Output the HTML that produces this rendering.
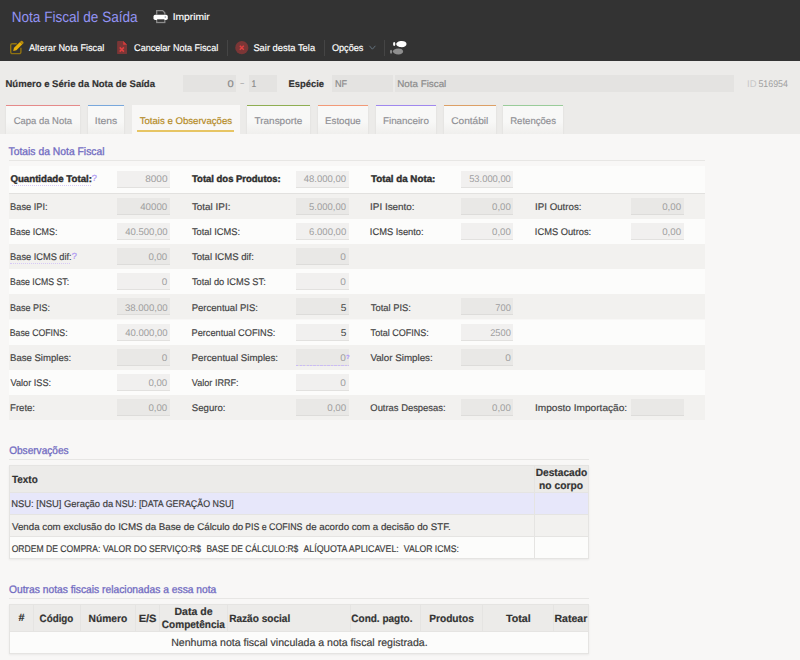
<!DOCTYPE html>
<html lang="pt-BR"><head><meta charset="utf-8"><title>Nota Fiscal de Saída</title>
<style>
html,body{margin:0;padding:0}
body{width:800px;height:660px;position:relative;overflow:hidden;background:#f8f7f6;font-family:"Liberation Sans", sans-serif}
#bx div{position:absolute}
.t{position:absolute;white-space:pre;line-height:1;transform-origin:0 50%;font-family:"Liberation Sans", sans-serif;text-rendering:geometricPrecision}
.md{-webkit-text-stroke:.16px #fff}
.hv{-webkit-text-stroke:.18px}
.hd{-webkit-text-stroke:.32px}
.bd{-webkit-text-stroke:.4px}
.ic{position:absolute;overflow:visible}
</style></head>
<body>
<div id="bx">
<div style="left:0px;top:0px;width:800px;height:61px;background:#333333"></div>
<div style="left:0px;top:61px;width:800px;height:73px;background:#ecebe9"></div>
<div style="left:227px;top:39.5px;width:1px;height:16px;background:#454545"></div>
<div style="left:324px;top:39.5px;width:1px;height:16px;background:#454545"></div>
<div style="left:384px;top:39.5px;width:1px;height:16px;background:#454545"></div>
<div style="left:182.6px;top:75px;width:53.4px;height:17px;background:#e4e3e1"></div>
<div style="left:249px;top:75px;width:28px;height:17px;background:#e4e3e1"></div>
<div style="left:332px;top:75px;width:61px;height:17px;background:#e4e3e1"></div>
<div style="left:395px;top:75px;width:339.4px;height:17px;background:#e4e3e1"></div>
<div style="left:6px;top:105px;width:74px;height:29px;background:linear-gradient(#f8f8f7 55%,#f0efed);border-top:1px solid #e58a8a;box-sizing:border-box;box-shadow:0 1px 2px rgba(0,0,0,.08)"></div>
<div style="left:88px;top:105px;width:36.4px;height:29px;background:linear-gradient(#f8f8f7 55%,#f0efed);border-top:1px solid #79a8dc;box-sizing:border-box;box-shadow:0 1px 2px rgba(0,0,0,.08)"></div>
<div style="left:247px;top:105px;width:63px;height:29px;background:linear-gradient(#f8f8f7 55%,#f0efed);border-top:1px solid #8fae52;box-sizing:border-box;box-shadow:0 1px 2px rgba(0,0,0,.08)"></div>
<div style="left:317.6px;top:105px;width:50.4px;height:29px;background:linear-gradient(#f8f8f7 55%,#f0efed);border-top:1px solid #f29a78;box-sizing:border-box;box-shadow:0 1px 2px rgba(0,0,0,.08)"></div>
<div style="left:375.6px;top:105px;width:60.4px;height:29px;background:linear-gradient(#f8f8f7 55%,#f0efed);border-top:1px solid #a088ee;box-sizing:border-box;box-shadow:0 1px 2px rgba(0,0,0,.08)"></div>
<div style="left:443.6px;top:105px;width:52px;height:29px;background:linear-gradient(#f8f8f7 55%,#f0efed);border-top:1px solid #dca066;box-sizing:border-box;box-shadow:0 1px 2px rgba(0,0,0,.08)"></div>
<div style="left:502.6px;top:105px;width:60.6px;height:29px;background:linear-gradient(#f8f8f7 55%,#f0efed);border-top:1px solid #9acc9a;box-sizing:border-box;box-shadow:0 1px 2px rgba(0,0,0,.08)"></div>
<div style="left:0px;top:134px;width:800px;height:526px;background:#f8f7f6"></div>
<div style="left:132px;top:105px;width:107.6px;height:30px;background:#f8f7f6"></div>
<div style="left:137.4px;top:130.3px;width:97px;height:1.4px;background:#e7c564"></div>
<div style="left:9px;top:160px;width:695.8px;height:1px;background:#e7e6e4"></div>
<div style="left:9px;top:459px;width:580.2px;height:1px;background:#e7e6e4"></div>
<div style="left:9px;top:598px;width:580.2px;height:1px;background:#e7e6e4"></div>
<div style="left:9px;top:166px;width:695.8px;height:27px;background:#fcfcfb"></div>
<div style="left:9px;top:193px;width:695.8px;height:1px;background:#e2e1df"></div>
<div style="left:9px;top:194px;width:695.8px;height:25.1px;background:#f2f1ef"></div>
<div style="left:9px;top:219.1px;width:695.8px;height:25.1px;background:#fcfcfb"></div>
<div style="left:9px;top:244.2px;width:695.8px;height:25.1px;background:#f2f1ef"></div>
<div style="left:9px;top:269.3px;width:695.8px;height:25.1px;background:#fcfcfb"></div>
<div style="left:9px;top:294.4px;width:695.8px;height:25.1px;background:#f2f1ef"></div>
<div style="left:9px;top:319.5px;width:695.8px;height:25.1px;background:#fcfcfb"></div>
<div style="left:9px;top:344.6px;width:695.8px;height:25.1px;background:#f2f1ef"></div>
<div style="left:9px;top:369.7px;width:695.8px;height:25.1px;background:#fcfcfb"></div>
<div style="left:9px;top:394.8px;width:695.8px;height:25.1px;background:#f2f1ef"></div>
<div style="left:117px;top:170.6px;width:53px;height:17px;background:#f1f0ef;border-bottom:1px solid #e2e1df;box-sizing:border-box"></div>
<div style="left:295.6px;top:170.6px;width:53.1px;height:17px;background:#f1f0ef;border-bottom:1px solid #e2e1df;box-sizing:border-box"></div>
<div style="left:460.6px;top:170.6px;width:52.9px;height:17px;background:#f1f0ef;border-bottom:1px solid #e2e1df;box-sizing:border-box"></div>
<div style="left:117px;top:198px;width:53px;height:17px;background:#e9e8e6;border-bottom:1px solid #dddcda;box-sizing:border-box"></div>
<div style="left:295.6px;top:198px;width:53.1px;height:17px;background:#e9e8e6;border-bottom:1px solid #dddcda;box-sizing:border-box"></div>
<div style="left:460.6px;top:198px;width:52.9px;height:17px;background:#e9e8e6;border-bottom:1px solid #dddcda;box-sizing:border-box"></div>
<div style="left:630.6px;top:198px;width:53px;height:17px;background:#e9e8e6;border-bottom:1px solid #dddcda;box-sizing:border-box"></div>
<div style="left:117px;top:223.1px;width:53px;height:17px;background:#f1f0ef;border-bottom:1px solid #e2e1df;box-sizing:border-box"></div>
<div style="left:295.6px;top:223.1px;width:53.1px;height:17px;background:#f1f0ef;border-bottom:1px solid #e2e1df;box-sizing:border-box"></div>
<div style="left:460.6px;top:223.1px;width:52.9px;height:17px;background:#f1f0ef;border-bottom:1px solid #e2e1df;box-sizing:border-box"></div>
<div style="left:630.6px;top:223.1px;width:53px;height:17px;background:#f1f0ef;border-bottom:1px solid #e2e1df;box-sizing:border-box"></div>
<div style="left:117px;top:248.2px;width:53px;height:17px;background:#e9e8e6;border-bottom:1px solid #dddcda;box-sizing:border-box"></div>
<div style="left:295.6px;top:248.2px;width:53.1px;height:17px;background:#e9e8e6;border-bottom:1px solid #dddcda;box-sizing:border-box"></div>
<div style="left:117px;top:273.3px;width:53px;height:17px;background:#f1f0ef;border-bottom:1px solid #e2e1df;box-sizing:border-box"></div>
<div style="left:295.6px;top:273.3px;width:53.1px;height:17px;background:#f1f0ef;border-bottom:1px solid #e2e1df;box-sizing:border-box"></div>
<div style="left:117px;top:298.4px;width:53px;height:17px;background:#e9e8e6;border-bottom:1px solid #dddcda;box-sizing:border-box"></div>
<div style="left:295.6px;top:298.4px;width:53.1px;height:17px;background:#e9e8e6;border-bottom:1px solid #dddcda;box-sizing:border-box"></div>
<div style="left:460.6px;top:298.4px;width:52.9px;height:17px;background:#e9e8e6;border-bottom:1px solid #dddcda;box-sizing:border-box"></div>
<div style="left:117px;top:323.5px;width:53px;height:17px;background:#f1f0ef;border-bottom:1px solid #e2e1df;box-sizing:border-box"></div>
<div style="left:295.6px;top:323.5px;width:53.1px;height:17px;background:#f1f0ef;border-bottom:1px solid #e2e1df;box-sizing:border-box"></div>
<div style="left:460.6px;top:323.5px;width:52.9px;height:17px;background:#f1f0ef;border-bottom:1px solid #e2e1df;box-sizing:border-box"></div>
<div style="left:117px;top:348.6px;width:53px;height:17px;background:#e9e8e6;border-bottom:1px solid #dddcda;box-sizing:border-box"></div>
<div style="left:295.6px;top:348.6px;width:53.1px;height:17px;background:#e9e8e6;border-bottom:1px solid #dddcda;box-sizing:border-box"></div>
<div style="left:460.6px;top:348.6px;width:52.9px;height:17px;background:#e9e8e6;border-bottom:1px solid #dddcda;box-sizing:border-box"></div>
<div style="left:117px;top:373.7px;width:53px;height:17px;background:#f1f0ef;border-bottom:1px solid #e2e1df;box-sizing:border-box"></div>
<div style="left:295.6px;top:373.7px;width:53.1px;height:17px;background:#f1f0ef;border-bottom:1px solid #e2e1df;box-sizing:border-box"></div>
<div style="left:117px;top:398.8px;width:53px;height:17px;background:#e9e8e6;border-bottom:1px solid #dddcda;box-sizing:border-box"></div>
<div style="left:295.6px;top:398.8px;width:53.1px;height:17px;background:#e9e8e6;border-bottom:1px solid #dddcda;box-sizing:border-box"></div>
<div style="left:460.6px;top:398.8px;width:52.9px;height:17px;background:#e9e8e6;border-bottom:1px solid #dddcda;box-sizing:border-box"></div>
<div style="left:630.6px;top:398.8px;width:53px;height:17px;background:#e9e8e6;border-bottom:1px solid #dddcda;box-sizing:border-box"></div>
<div style="left:12px;top:184.6px;width:79px;height:0;border-top:1px dotted #d6c8f6"></div>
<div style="left:10.4px;top:262.9px;width:60px;height:0;border-top:1px dotted #d6c8f6"></div>
<div style="left:295.6px;top:365.2px;width:53px;height:1px;background:repeating-linear-gradient(90deg,#cbbcf5 0 2px,transparent 2px 3.5px)"></div>
<div style="left:9px;top:465.4px;width:580.2px;height:93.2px;background:#e5e4e2;box-shadow:0 1px 2px rgba(0,0,0,.06)"></div>
<div style="left:10px;top:466.4px;width:524px;height:25.6px;background:#ecebe9"></div>
<div style="left:535px;top:466.4px;width:53.2px;height:25.6px;background:#ecebe9"></div>
<div style="left:10px;top:492.6px;width:524px;height:21.4px;background:#e7e7fa"></div>
<div style="left:535px;top:492.6px;width:53.2px;height:21.4px;background:#e7e7fa"></div>
<div style="left:10px;top:514.8px;width:524px;height:21.6px;background:#f2f1ef"></div>
<div style="left:535px;top:514.8px;width:53.2px;height:21.6px;background:#f2f1ef"></div>
<div style="left:10px;top:537.2px;width:524px;height:20.4px;background:#fcfcfb"></div>
<div style="left:535px;top:537.2px;width:53.2px;height:20.4px;background:#fcfcfb"></div>
<div style="left:9px;top:604.2px;width:580.2px;height:50.2px;background:#e5e4e2;box-shadow:0 1px 2px rgba(0,0,0,.06)"></div>
<div style="left:10px;top:605.2px;width:22.8px;height:26px;background:#ecebe9"></div>
<div style="left:33.8px;top:605.2px;width:46.3px;height:26px;background:#ecebe9"></div>
<div style="left:81.1px;top:605.2px;width:54.2px;height:26px;background:#ecebe9"></div>
<div style="left:136.3px;top:605.2px;width:22.8px;height:26px;background:#ecebe9"></div>
<div style="left:160.1px;top:605.2px;width:66.5px;height:26px;background:#ecebe9"></div>
<div style="left:227.6px;top:605.2px;width:122px;height:26px;background:#ecebe9"></div>
<div style="left:350.6px;top:605.2px;width:69.5px;height:26px;background:#ecebe9"></div>
<div style="left:421.1px;top:605.2px;width:61px;height:26px;background:#ecebe9"></div>
<div style="left:483.1px;top:605.2px;width:69.5px;height:26px;background:#ecebe9"></div>
<div style="left:553.6px;top:605.2px;width:34.6px;height:26px;background:#ecebe9"></div>
<div style="left:10px;top:632px;width:578.2px;height:21.4px;background:#fcfcfb"></div>
</div>

<svg class="ic" style="left:152px;top:8px" width="18" height="17" viewBox="152 8 18 17">
 <path d="M156.7 14.6v-4h6l2.100 2.100v1.900" fill="none" stroke="#8d8d8d" stroke-width="1.300"/>
 <rect x="156.700" y="19.200" width="8.100" height="3.300" fill="none" stroke="#8d8d8d" stroke-width="1.300"/>
 <rect x="153.500" y="14.700" width="14.300" height="5.300" rx="1.700" fill="#fff"/>
 <rect x="157.100" y="19.300" width="7.300" height="1.100" fill="#3a3a3a"/>
 <circle cx="165.300" cy="17.100" r=".8" fill="#9aa4ae"/>
</svg>
<svg class="ic" style="left:8px;top:39px" width="18" height="18" viewBox="8 39 18 18">
 <path d="M16.800 43.700h-4.500a1.600 1.600 0 0 0-1.600 1.600v6.700a1.600 1.600 0 0 0 1.600 1.600h7a1.600 1.600 0 0 0 1.600-1.600v-4.200" fill="none" stroke="#8f7210" stroke-width="1.400"/>
 <path d="M13.200 51l.8-3.200 6-5.900 2.400 2.400-6 5.900z" fill="#e6b00a"/>
 <path d="M20 41.900l.9-.9a1 1 0 0 1 1.400 0l1 1a1 1 0 0 1 0 1.400l-.9.9z" fill="#b88d0c"/>
</svg>
<svg class="ic" style="left:115px;top:39px" width="14" height="17" viewBox="115 39 14 17">
 <path d="M118 41h5.200l3.800 3.800v8.400a.9.900 0 0 1-.9.900h-8.100a.9.900 0 0 1-.9-.9v-11.300a.9.900 0 0 1 .9-.9z" fill="#7b3636"/>
 <path d="M123.200 41l3.800 3.800h-3.800z" fill="#d63c3c"/>
 <path d="M119.700 47.400l4.200 4.200m0-4.200l-4.200 4.200" stroke="#e04040" stroke-width="1.500" fill="none"/>
</svg>
<svg class="ic" style="left:234px;top:40px" width="16" height="16" viewBox="234 40 16 16">
 <circle cx="241.800" cy="47.700" r="6.600" fill="#7b3636"/>
 <path d="M239.800 45.700l4 4m0-4l-4 4" stroke="#e04040" stroke-width="1.500" fill="none"/>
</svg>
<svg class="ic" style="left:368px;top:44px" width="9" height="7" viewBox="368 44 9 7">
 <path d="M369.400 45.800l3 3.400 3-3.400" stroke="#62707c" stroke-width="1" fill="none"/>
</svg>
<svg class="ic" style="left:388px;top:39px" width="20" height="17" viewBox="388 39 20 17">
 <ellipse cx="394.200" cy="44" rx="1.150" ry="2.050" fill="#fff"/>
 <path d="M396.200 44.100C396.200 42.600 398.500 41 401.800 41C404.600 41 406.500 42.300 406.500 44.100C406.500 45.900 404.600 47.300 401.800 47.300C398.500 47.300 396.200 45.600 396.200 44.100Z" fill="#fff"/>
 <ellipse cx="391.050" cy="51.700" rx="1.050" ry="1.950" fill="#8e8e8e"/>
 <path d="M392.900 51.500C392.900 50 395.200 48.600 398.400 48.600C401.200 48.600 403.100 49.800 403.100 51.500C403.100 53.200 401.200 54.400 398.400 54.400C395.200 54.400 392.900 53 392.900 51.500Z" fill="#8e8e8e"/>
</svg>

<div id="tx">
<span class="t" style="left:11px;top:10.3px;font-size:15px;color:#9494f5;transform:translateX(0.72px) scaleX(0.9043)">Nota Fiscal de Saída</span>
<span class="t md" style="left:172px;top:12.69px;font-size:9.7px;color:#fff;transform:translateX(0.67px) scaleX(1.0598)">Imprimir</span>
<span class="t md" style="left:28px;top:43.59px;font-size:9.7px;color:#fff;transform:translateX(0.95px) scaleX(0.9460)">Alterar Nota Fiscal</span>
<span class="t md" style="left:134px;top:43.59px;font-size:9.7px;color:#fff;transform:translateX(0.12px) scaleX(0.9352)">Cancelar Nota Fiscal</span>
<span class="t md" style="left:253px;top:43.59px;font-size:9.7px;color:#fff;transform:translateX(0.38px) scaleX(0.9655)">Sair desta Tela</span>
<span class="t md" style="left:331px;top:43.59px;font-size:9.7px;color:#fff;transform:translateX(0.89px) scaleX(0.9430)">Opções</span>
<span class="t hv" style="left:5px;top:79.79px;font-size:9.7px;color:#333;transform:translateX(0.44px) scaleX(0.9851);font-weight:700">Número e Série da Nota de Saída</span>
<span class="t hv" style="left:227px;top:79.79px;font-size:9.7px;color:#8a8a8a;transform:translateX(0.39px) scaleX(1.1451)">0</span>
<span class="t hv" style="left:240px;top:78.79px;font-size:9.7px;color:#b4b4b4;transform:translateX(0.05px) scaleX(1.3444)">-</span>
<span class="t hv" style="left:251px;top:79.79px;font-size:9.7px;color:#8a8a8a;transform:translateX(0.41px) scaleX(0.8726)">1</span>
<span class="t hv" style="left:288px;top:79.79px;font-size:9.7px;color:#333;transform:translateX(0.50px) scaleX(0.9703);font-weight:700">Espécie</span>
<span class="t hv" style="left:335px;top:79.79px;font-size:9.7px;color:#8a8a8a;transform:translateX(0.03px) scaleX(0.9398)">NF</span>
<span class="t hv" style="left:397px;top:79.79px;font-size:9.7px;color:#8a8a8a;transform:translateX(0.15px) scaleX(1.0144)">Nota Fiscal</span>
<span class="t" style="left:747px;top:79.79px;font-size:9.7px;color:#c8c8c8;transform:translateX(0.05px) scaleX(0.9819)">ID</span>
<span class="t" style="left:758px;top:79.79px;font-size:9.7px;color:#a0a0a0;transform:translateX(0.44px) scaleX(0.9091)">516954</span>
<span class="t hv" style="left:13px;top:117.29px;font-size:9.7px;color:#909095;transform:translateX(0.73px) scaleX(0.9755)">Capa da Nota</span>
<span class="t hv" style="left:94px;top:117.29px;font-size:9.7px;color:#909095;transform:translateX(0.87px) scaleX(1.0672)">Itens</span>
<span class="t hv" style="left:139px;top:117.29px;font-size:9.7px;color:#b48a24;transform:translateX(0.69px) scaleX(0.9913)">Totais e Observações</span>
<span class="t hv" style="left:254px;top:117.29px;font-size:9.7px;color:#909095;transform:translateX(0.57px) scaleX(1.0262)">Transporte</span>
<span class="t hv" style="left:325px;top:117.29px;font-size:9.7px;color:#909095;transform:translateX(0.05px) scaleX(1.0054)">Estoque</span>
<span class="t hv" style="left:382px;top:117.29px;font-size:9.7px;color:#909095;transform:translateX(0.97px) scaleX(1.0146)">Financeiro</span>
<span class="t hv" style="left:451px;top:117.29px;font-size:9.7px;color:#909095;transform:translateX(0.18px) scaleX(1.0459)">Contábil</span>
<span class="t hv" style="left:510px;top:117.29px;font-size:9.7px;color:#909095;transform:translateX(0.14px) scaleX(0.9889)">Retenções</span>
<span class="t hd" style="left:8px;top:146.77px;font-size:10.9px;color:#726cc2;transform:translateX(0.50px) scaleX(0.9502)">Totais da Nota Fiscal</span>
<span class="t hd" style="left:9px;top:445.57px;font-size:10.9px;color:#726cc2;transform:translateX(0.16px) scaleX(0.9259)">Observações</span>
<span class="t hd" style="left:9px;top:584.77px;font-size:10.9px;color:#726cc2;transform:translateX(0.04px) scaleX(0.9433)">Outras notas fiscais relacionadas a essa nota</span>
<span class="t bd" style="left:10px;top:174.79px;font-size:9.7px;color:#2e2e2e;transform:translateX(0.41px) scaleX(0.9992);font-weight:700">Quantidade Total:</span>
<span class="t" style="left:145px;top:174.79px;font-size:9.7px;color:#9f9f9f;transform:translateX(0.20px) scaleX(1.0369)">8000</span>
<span class="t bd" style="left:192px;top:174.79px;font-size:9.7px;color:#2e2e2e;transform:translateX(0.01px) scaleX(0.9779);font-weight:700">Total dos Produtos:</span>
<span class="t" style="left:303px;top:174.79px;font-size:9.7px;color:#9f9f9f;transform:translateX(0.78px) scaleX(0.9814)">48.000,00</span>
<span class="t bd" style="left:370px;top:174.79px;font-size:9.7px;color:#2e2e2e;transform:translateX(0.97px) scaleX(1.0074);font-weight:700">Total da Nota:</span>
<span class="t" style="left:469px;top:174.79px;font-size:9.7px;color:#9f9f9f;transform:translateX(0.16px) scaleX(0.9665)">53.000,00</span>
<span class="t hv" style="left:10px;top:202.89px;font-size:9.7px;color:#444;transform:translateX(0.11px) scaleX(0.9558)">Base IPI:</span>
<span class="t" style="left:140px;top:202.89px;font-size:9.7px;color:#9f9f9f;transform:translateX(0.20px) scaleX(1.0022)">40000</span>
<span class="t hv" style="left:191px;top:202.89px;font-size:9.7px;color:#444;transform:translateX(0.89px) scaleX(1.0217)">Total IPI:</span>
<span class="t" style="left:309px;top:202.89px;font-size:9.7px;color:#9f9f9f;transform:translateX(0.12px) scaleX(0.9751)">5.000,00</span>
<span class="t hv" style="left:370px;top:202.89px;font-size:9.7px;color:#444;transform:translateX(0.08px) scaleX(1.0192)">IPI Isento:</span>
<span class="t" style="left:492px;top:202.89px;font-size:9.7px;color:#9f9f9f;transform:translateX(0.02px) scaleX(0.9950)">0,00</span>
<span class="t hv" style="left:535px;top:202.89px;font-size:9.7px;color:#444;transform:translateX(0.10px) scaleX(1.0017)">IPI Outros:</span>
<span class="t" style="left:662px;top:202.89px;font-size:9.7px;color:#9f9f9f;transform:translateX(0.16px) scaleX(1.0000)">0,00</span>
<span class="t hv" style="left:10px;top:227.99px;font-size:9.7px;color:#444;transform:translateX(0.03px) scaleX(0.9167)">Base ICMS:</span>
<span class="t" style="left:125px;top:227.99px;font-size:9.7px;color:#9f9f9f;transform:translateX(0.25px) scaleX(0.9830)">40.500,00</span>
<span class="t hv" style="left:191px;top:227.99px;font-size:9.7px;color:#444;transform:translateX(0.94px) scaleX(0.9599)">Total ICMS:</span>
<span class="t" style="left:309px;top:227.99px;font-size:9.7px;color:#9f9f9f;transform:translateX(0.10px) scaleX(0.9833)">6.000,00</span>
<span class="t hv" style="left:369px;top:227.99px;font-size:9.7px;color:#444;transform:translateX(0.85px) scaleX(0.9605)">ICMS Isento:</span>
<span class="t" style="left:492px;top:227.99px;font-size:9.7px;color:#9f9f9f;transform:translateX(0.02px) scaleX(0.9950)">0,00</span>
<span class="t hv" style="left:534px;top:227.99px;font-size:9.7px;color:#444;transform:translateX(0.87px) scaleX(0.9600)">ICMS Outros:</span>
<span class="t" style="left:662px;top:227.99px;font-size:9.7px;color:#9f9f9f;transform:translateX(0.16px) scaleX(1.0000)">0,00</span>
<span class="t hv" style="left:10px;top:253.09px;font-size:9.7px;color:#444;transform:translateX(0.09px) scaleX(0.9533)">Base ICMS dif:</span>
<span class="t" style="left:148px;top:253.09px;font-size:9.7px;color:#9f9f9f;transform:translateX(0.42px) scaleX(0.9969)">0,00</span>
<span class="t hv" style="left:191px;top:253.09px;font-size:9.7px;color:#444;transform:translateX(0.91px) scaleX(0.9834)">Total ICMS dif:</span>
<span class="t" style="left:340px;top:253.09px;font-size:9.7px;color:#9f9f9f;transform:translateX(0.21px) scaleX(1.0381)">0</span>
<span class="t hv" style="left:10px;top:278.19px;font-size:9.7px;color:#444;transform:translateX(0.12px) scaleX(0.8981)">Base ICMS ST:</span>
<span class="t" style="left:161px;top:278.19px;font-size:9.7px;color:#9f9f9f;transform:translateX(0.81px) scaleX(1.0204)">0</span>
<span class="t hv" style="left:191px;top:278.19px;font-size:9.7px;color:#444;transform:translateX(0.91px) scaleX(0.9517)">Total do ICMS ST:</span>
<span class="t" style="left:340px;top:278.19px;font-size:9.7px;color:#9f9f9f;transform:translateX(0.21px) scaleX(1.0381)">0</span>
<span class="t hv" style="left:10px;top:304.29px;font-size:9.7px;color:#444;transform:translateX(0.05px) scaleX(0.9254)">Base PIS:</span>
<span class="t" style="left:124px;top:304.29px;font-size:9.7px;color:#9f9f9f;transform:translateX(0.90px) scaleX(0.9898)">38.000,00</span>
<span class="t hv" style="left:191px;top:304.29px;font-size:9.7px;color:#444;transform:translateX(0.64px) scaleX(0.9856)">Percentual PIS:</span>
<span class="t" style="left:340px;top:304.29px;font-size:9.7px;color:#444;transform:translateX(0.67px) scaleX(1.0444)">5</span>
<span class="t hv" style="left:370px;top:304.29px;font-size:9.7px;color:#444;transform:translateX(0.71px) scaleX(0.9712)">Total PIS:</span>
<span class="t" style="left:495px;top:304.29px;font-size:9.7px;color:#9f9f9f;transform:translateX(0.35px) scaleX(0.9581)">700</span>
<span class="t hv" style="left:9px;top:329.39px;font-size:9.7px;color:#444;transform:translateX(0.76px) scaleX(0.9035)">Base COFINS:</span>
<span class="t" style="left:125px;top:329.39px;font-size:9.7px;color:#9f9f9f;transform:translateX(0.25px) scaleX(0.9830)">40.000,00</span>
<span class="t hv" style="left:191px;top:329.39px;font-size:9.7px;color:#444;transform:translateX(0.54px) scaleX(0.9499)">Percentual COFINS:</span>
<span class="t" style="left:340px;top:329.39px;font-size:9.7px;color:#444;transform:translateX(0.67px) scaleX(1.0444)">5</span>
<span class="t hv" style="left:370px;top:329.39px;font-size:9.7px;color:#444;transform:translateX(0.62px) scaleX(0.9313)">Total COFINS:</span>
<span class="t" style="left:490px;top:329.39px;font-size:9.7px;color:#9f9f9f;transform:translateX(0.21px) scaleX(0.9566)">2500</span>
<span class="t hv" style="left:10px;top:354.49px;font-size:9.7px;color:#444;transform:translateX(0.04px) scaleX(0.9866)">Base Simples:</span>
<span class="t" style="left:161px;top:354.49px;font-size:9.7px;color:#9f9f9f;transform:translateX(0.81px) scaleX(1.0204)">0</span>
<span class="t hv" style="left:191px;top:354.49px;font-size:9.7px;color:#444;transform:translateX(0.60px) scaleX(1.0032)">Percentual Simples:</span>
<span class="t" style="left:340px;top:354.49px;font-size:9.7px;color:#9f9f9f;transform:translateX(0.21px) scaleX(1.0381)">0</span>
<span class="t hv" style="left:370px;top:354.49px;font-size:9.7px;color:#444;transform:translateX(0.38px) scaleX(1.0095)">Valor Simples:</span>
<span class="t" style="left:505px;top:354.49px;font-size:9.7px;color:#9f9f9f;transform:translateX(0.17px) scaleX(1.0401)">0</span>
<span class="t hv" style="left:10px;top:378.59px;font-size:9.7px;color:#444;transform:translateX(0.45px) scaleX(0.9477)">Valor ISS:</span>
<span class="t" style="left:148px;top:378.59px;font-size:9.7px;color:#9f9f9f;transform:translateX(0.42px) scaleX(0.9969)">0,00</span>
<span class="t hv" style="left:191px;top:378.59px;font-size:9.7px;color:#444;transform:translateX(0.83px) scaleX(0.9382)">Valor IRRF:</span>
<span class="t" style="left:340px;top:378.59px;font-size:9.7px;color:#9f9f9f;transform:translateX(0.21px) scaleX(1.0381)">0</span>
<span class="t hv" style="left:10px;top:403.69px;font-size:9.7px;color:#444;transform:translateX(0.04px) scaleX(0.9866)">Frete:</span>
<span class="t" style="left:148px;top:403.69px;font-size:9.7px;color:#9f9f9f;transform:translateX(0.42px) scaleX(0.9969)">0,00</span>
<span class="t hv" style="left:191px;top:403.69px;font-size:9.7px;color:#444;transform:translateX(0.86px) scaleX(0.9918)">Seguro:</span>
<span class="t" style="left:327px;top:403.69px;font-size:9.7px;color:#9f9f9f;transform:translateX(0.21px) scaleX(1.0099)">0,00</span>
<span class="t hv" style="left:370px;top:403.69px;font-size:9.7px;color:#444;transform:translateX(0.33px) scaleX(0.9704)">Outras Despesas:</span>
<span class="t" style="left:492px;top:403.69px;font-size:9.7px;color:#9f9f9f;transform:translateX(0.02px) scaleX(0.9950)">0,00</span>
<span class="t hv" style="left:535px;top:403.69px;font-size:9.7px;color:#444;transform:translateX(0.01px) scaleX(1.0433)">Imposto Importação:</span>
<span class="t hv" style="left:91px;top:173.55px;font-size:8.8px;color:#ae98f4;transform:translateX(0.83px) scaleX(1.0553)">?</span>
<span class="t hv" style="left:71px;top:251.85px;font-size:8.8px;color:#ae98f4;transform:translateX(0.83px) scaleX(1.0553)">?</span>
<span class="t hv" style="left:345px;top:354.62px;font-size:6px;color:#b09af4;transform:translateX(0.88px) scaleX(1.0018);font-weight:700">?</span>
<span class="t hv" style="left:12px;top:474.63px;font-size:10.6px;color:#333;transform:translateX(0.04px) scaleX(0.9337);font-weight:700">Texto</span>
<span class="t hv" style="left:535px;top:468.33px;font-size:10.6px;color:#333;transform:translateX(0.65px) scaleX(0.9623);font-weight:700">Destacado</span>
<span class="t hv" style="left:539px;top:481.03px;font-size:10.6px;color:#333;transform:translateX(0.09px) scaleX(0.9684);font-weight:700">no corpo</span>
<span class="t hv" style="left:11px;top:499.79px;font-size:9.7px;color:#3c3c3c;transform:translateX(0.22px) scaleX(0.9709)">NSU: [NSU] Geração da</span>
<span class="t hv" style="left:115px;top:499.79px;font-size:9.7px;color:#3c3c3c;transform:translateX(0.22px) scaleX(0.9166)">NSU: [DATA GERAÇÃO NSU]</span>
<span class="t hv" style="left:11px;top:522.79px;font-size:9.7px;color:#3c3c3c;transform:translateX(0.98px) scaleX(1.0059)">Venda com exclusão do ICMS da Base de Cálculo do</span>
<span class="t hv" style="left:245px;top:522.79px;font-size:9.7px;color:#3c3c3c;transform:translateX(0.09px) scaleX(0.9097)">PIS e COFINS</span>
<span class="t hv" style="left:305px;top:522.79px;font-size:9.7px;color:#3c3c3c;transform:translateX(0.78px) scaleX(1.0042)">de acordo com a decisão do STF.</span>
<span class="t hv" style="left:11px;top:544.79px;font-size:9.7px;color:#3c3c3c;transform:translateX(0.65px) scaleX(0.8869)">ORDEM DE COMPRA:</span>
<span class="t hv" style="left:102px;top:544.79px;font-size:9.7px;color:#3c3c3c;transform:translateX(0.94px) scaleX(0.8872)">VALOR DO SERVIÇO:R$</span>
<span class="t hv" style="left:206px;top:544.79px;font-size:9.7px;color:#3c3c3c;transform:translateX(0.42px) scaleX(0.8706)">BASE DE CÁLCULO:R$</span>
<span class="t hv" style="left:303px;top:544.79px;font-size:9.7px;color:#3c3c3c;transform:translateX(0.40px) scaleX(0.9113)">ALÍQUOTA APLICAVEL:</span>
<span class="t hv" style="left:403px;top:544.79px;font-size:9.7px;color:#3c3c3c;transform:translateX(0.80px) scaleX(0.8925)">VALOR ICMS:</span>
<span class="t hv" style="left:18px;top:612.63px;font-size:10.6px;color:#333;transform:translateX(0.58px) scaleX(1.0156);font-weight:700">#</span>
<span class="t hv" style="left:39px;top:613.63px;font-size:10.6px;color:#333;transform:translateX(0.59px) scaleX(0.9253);font-weight:700">Código</span>
<span class="t hv" style="left:88px;top:613.63px;font-size:10.6px;color:#333;transform:translateX(0.60px) scaleX(0.9661);font-weight:700">Número</span>
<span class="t hv" style="left:138px;top:613.63px;font-size:10.6px;color:#333;transform:translateX(0.63px) scaleX(1.0485);font-weight:700">E/S</span>
<span class="t hv" style="left:174px;top:607.03px;font-size:10.6px;color:#333;transform:translateX(0.51px) scaleX(0.9943);font-weight:700">Data de</span>
<span class="t hv" style="left:161px;top:619.53px;font-size:10.6px;color:#333;transform:translateX(0.79px) scaleX(0.9488);font-weight:700">Competência</span>
<span class="t hv" style="left:229px;top:613.63px;font-size:10.6px;color:#333;transform:translateX(0.21px) scaleX(0.9508);font-weight:700">Razão social</span>
<span class="t hv" style="left:351px;top:613.63px;font-size:10.6px;color:#333;transform:translateX(0.30px) scaleX(0.9449);font-weight:700">Cond. pagto.</span>
<span class="t hv" style="left:429px;top:613.63px;font-size:10.6px;color:#333;transform:translateX(0.17px) scaleX(0.9604);font-weight:700">Produtos</span>
<span class="t hv" style="left:505px;top:613.63px;font-size:10.6px;color:#333;transform:translateX(0.99px) scaleX(1.0085);font-weight:700">Total</span>
<span class="t hv" style="left:554px;top:613.63px;font-size:10.6px;color:#333;transform:translateX(0.48px) scaleX(0.9939);font-weight:700">Ratear</span>
<span class="t hv" style="left:171px;top:637.73px;font-size:10.6px;color:#3c3c3c;transform:translateX(0.18px) scaleX(0.9988)">Nenhuma nota fiscal vinculada a nota fiscal registrada.</span>
</div>
</body></html>
